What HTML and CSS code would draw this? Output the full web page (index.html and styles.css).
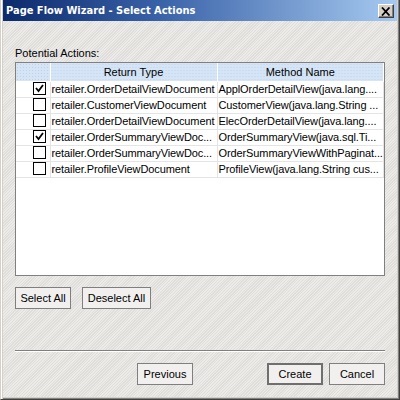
FILE: index.html
```html
<!DOCTYPE html>
<html>
<head>
<meta charset="utf-8">
<link rel="stylesheet" href="styles.css">
</head>
<body>
<div class="window">
  <div class="titlebar">
    <span class="title">Page Flow Wizard - Select Actions</span>
    <span class="close"><svg width="10" height="9" viewBox="0 0 10 9"><path d="M1 0.5 L8.5 8.5 M8.5 0.5 L1 8.5" stroke="#000" stroke-width="1.8" fill="none"/></svg></span>
  </div>
  <div class="content">
    <div class="label">Potential Actions:</div>
    <div class="tablebox">
      <table class="grid">
        <thead>
          <tr><th class="c1"></th><th class="c2">Return Type</th><th class="c3">Method Name</th></tr>
        </thead>
        <tbody>
          <tr><td class="c1"><span class="cb checked"></span></td><td>retailer.OrderDetailViewDocument</td><td>ApplOrderDetailView(java.lang....</td></tr>
          <tr><td class="c1"><span class="cb"></span></td><td>retailer.CustomerViewDocument</td><td>CustomerView(java.lang.String ...</td></tr>
          <tr><td class="c1"><span class="cb"></span></td><td>retailer.OrderDetailViewDocument</td><td>ElecOrderDetailView(java.lang....</td></tr>
          <tr><td class="c1"><span class="cb checked"></span></td><td>retailer.OrderSummaryViewDoc...</td><td>OrderSummaryView(java.sql.Ti...</td></tr>
          <tr><td class="c1"><span class="cb"></span></td><td>retailer.OrderSummaryViewDoc...</td><td>OrderSummaryViewWithPaginat...</td></tr>
          <tr><td class="c1"><span class="cb"></span></td><td>retailer.ProfileViewDocument</td><td>ProfileView(java.lang.String cus...</td></tr>
        </tbody>
      </table>
    </div>
    <div class="row-buttons">
      <button class="btn w56">Select All</button>
      <button class="btn w69">Deselect All</button>
    </div>
    <div class="separator"></div>
    <div class="footer">
      <button class="btn w56">Previous</button>
      <span class="spacer"></span>
      <button class="btn w56 default">Create</button>
      <button class="btn w56">Cancel</button>
    </div>
  </div>
</div>
</body>
</html>
```

FILE: styles.css
```css
html, body {
  margin: 0;
  padding: 0;
}
body {
  width: 400px;
  height: 400px;
  overflow: hidden;
  font-family: "Liberation Sans", Arial, sans-serif;
  font-size: 11px;
  color: #000;
}
.window {
  width: 400px;
  height: 400px;
  box-sizing: border-box;
  border-left: 1px solid #d4d0c8;
  border-right: 1px solid #404040;
  border-bottom: 1px solid #404040;
  box-shadow: inset 1px 0 0 #fff, inset 2px 0 0 #d4d0c8, inset -1px -1px 0 #808080, inset -2px -2px 0 #d4d0c8;
  background-color: #e4e3df;
  background-image: repeating-linear-gradient(135deg, rgba(255,255,255,0.3) 0 1px, rgba(0,0,0,0.025) 1px 2px);
  display: flex;
  flex-direction: column;
}
.titlebar {
  height: 21px;
  margin: 0 2px 0 2px;
  background: linear-gradient(to right, #0c2a6c 0%, #3a62a8 40%, #a6caf0 100%);
  display: flex;
  align-items: center;
  justify-content: space-between;
  padding: 0 3px 0 3px;
}
.title {
  color: #fff;
  font-family: "DejaVu Sans Condensed", "DejaVu Sans", sans-serif;
  font-stretch: condensed;
  font-weight: bold;
  font-size: 11px;
}
.close {
  width: 16px;
  height: 14px;
  box-sizing: border-box;
  background: #d4d0c8;
  border: 1px solid;
  border-color: #fff #404040 #404040 #fff;
  box-shadow: inset -1px -1px 0 #808080;
  display: flex;
  align-items: center;
  justify-content: center;
  margin-top: 1px;
}
.close svg { display: block; }
.content {
  flex: 1;
  padding: 0 14px 0 14px;
  display: flex;
  flex-direction: column;
}
.label {
  margin-top: 25px;
  height: 16px;
  line-height: 15px;
}
.tablebox {
  height: 214px;
  box-sizing: border-box;
  border: 1px solid #808080;
  background: #fff;
  overflow: hidden;
}
.grid {
  border-collapse: collapse;
  table-layout: fixed;
  width: 368px;
}
.grid th {
  height: 18px;
  box-sizing: border-box;
  padding: 0;
  font-weight: normal;
  text-align: center;
  background-color: #d6e5f6;
  background-image: radial-gradient(#bcd3ee 0.6px, transparent 0.8px);
  background-size: 3px 3px;
  border-right: 1px solid #fff;
  border-bottom: 1px solid #fff;
}
.grid td {
  height: 16px;
  box-sizing: border-box;
  padding: 0 0 0 1px;
  white-space: nowrap;
  overflow: hidden;
  letter-spacing: -0.1px;
  border-right: 1px solid #e4e4e4;
  border-bottom: 1px solid #e4e4e4;
  line-height: 15px;
}
.grid .c1 { width: 34px; }
.grid th.c2 { width: 167px; }
.grid td.c1 {
  text-align: right;
  padding: 0 4px 0 0;
}
.cb {
  display: inline-block;
  width: 13px;
  height: 13px;
  box-sizing: border-box;
  border: 1px solid #000;
  background: #fff;
  vertical-align: middle;
  margin-top: -2px;
}
.cb.checked {
  background-image: url("data:image/svg+xml,%3Csvg xmlns='http://www.w3.org/2000/svg' width='11' height='11'%3E%3Cpath d='M2 5 L4.5 8 L9 2' stroke='%23000' stroke-width='1.8' fill='none'/%3E%3C/svg%3E");
  background-repeat: no-repeat;
}
.row-buttons {
  margin-top: 11px;
  display: flex;
  gap: 11px;
}
.btn {
  height: 22px;
  box-sizing: border-box;
  font-family: "Liberation Sans", Arial, sans-serif;
  font-size: 11px;
  color: #000;
  background: #f1f0ee;
  border: 1px solid #7f7f7f;
  padding: 0;
}
.w56 { width: 56px; }
.w69 { width: 69px; }
.btn.default {
  border: 2px solid #6f6f6f;
}
.separator {
  margin-top: 41px;
  height: 1px;
  background: #808080;
  box-shadow: 0 1px 0 #fff;
}
.footer {
  margin-top: 12px;
  display: flex;
  align-items: center;
  padding-left: 122px;
  gap: 6px;
}
.spacer { flex: 1; }
```
